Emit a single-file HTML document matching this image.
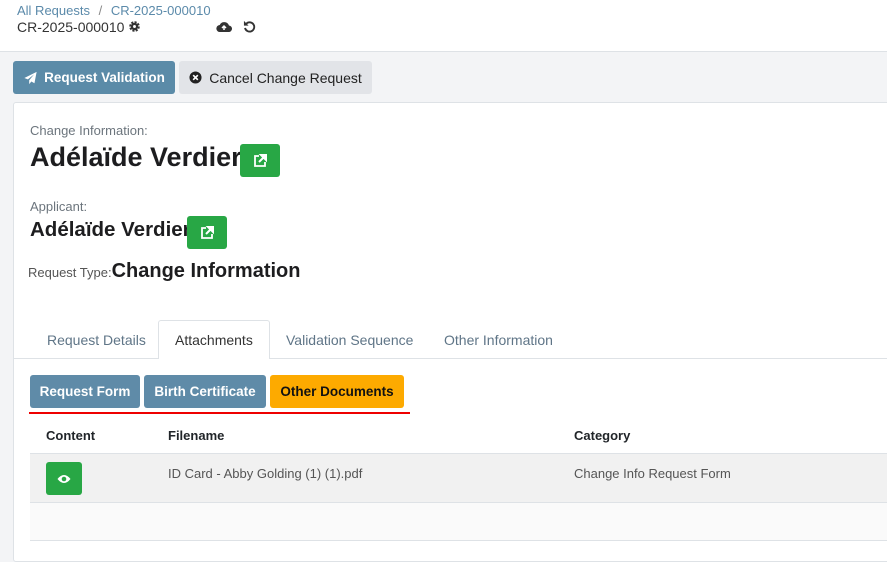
<!DOCTYPE html>
<html><head><meta charset="utf-8"><style>
*{box-sizing:border-box;margin:0;padding:0}
body{width:887px;height:543px;overflow:hidden;background:#f3f4f6;font-family:"Liberation Sans",sans-serif;color:#212529;position:relative}
.abs{position:absolute;white-space:nowrap}
.hdr{left:0;top:0;width:887px;height:52px;background:#fff;border-bottom:1px solid #dee2e6}
.btn{position:absolute;border-radius:3px;font-size:14px;font-weight:bold;display:flex;align-items:center;justify-content:center;white-space:nowrap}
.card{left:13px;top:102px;width:880px;height:460px;background:#fff;border:1px solid #dee2e6;border-radius:3px}
.lbl{font-size:13px;color:#6c757d}
.g{background:#28a745;border-radius:3px;display:flex;align-items:center;justify-content:center}
.tab{position:absolute;top:332px;font-size:14px;color:#5f7587;white-space:nowrap}
</style></head><body>
<div class="abs hdr"></div>
<div class="abs" style="left:17px;top:3px;font-size:13px;color:#5b8aaa">All Requests <span style="color:#888;margin:0 5px">/</span> CR-2025-000010</div>
<div class="abs" style="left:17px;top:19px;font-size:14px;color:#333">CR-2025-000010</div>
<svg class="abs" style="left:128px;top:20px" width="13" height="13" viewBox="0 0 16 16"><circle cx="8" cy="8" r="5" fill="none" stroke="#333" stroke-width="3" stroke-dasharray="2.5 1.4"/><circle cx="8" cy="8" r="4.5" fill="#333"/><circle cx="8" cy="8" r="1.8" fill="#fff"/></svg>
<svg class="abs" style="left:216px;top:20px" width="16" height="13" viewBox="0 0 16 13"><path d="M4 12a3.5 3.5 0 0 1-.3-7A5 5 0 0 1 13 5.5a3.2 3.2 0 0 1-.5 6.5z" fill="#333"/><path d="M8 10V6M6 8l2-2 2 2" stroke="#fff" stroke-width="1.5" fill="none"/></svg>
<svg class="abs" style="left:243px;top:20px" width="13" height="13" viewBox="0 0 14 14"><path d="M3.5 4A5 5 0 1 1 2.2 8.5" stroke="#333" stroke-width="2" fill="none"/><path d="M1 1v5h5z" fill="#333"/></svg>
<div class="btn" style="left:13px;top:61px;width:162px;height:33px;background:#5b8ba8;color:#fff;font-size:13.5px"><svg width="15" height="14" viewBox="0 0 16 16" style="margin-right:6px"><path d="M15 1L1 8l4 1.5L12 4 6.5 10.5V15l2.5-3 3.5 2z" fill="#fff"/></svg>Request Validation</div>
<div class="btn" style="left:179px;top:61px;width:193px;height:33px;background:#e2e4e8;color:#222;font-weight:normal"><svg width="13" height="13" viewBox="0 0 14 14" style="margin-right:7px"><circle cx="7" cy="7" r="6.5" fill="#222"/><path d="M4.5 4.5l5 5M9.5 4.5l-5 5" stroke="#fff" stroke-width="1.8"/></svg>Cancel Change Request</div>
<div class="abs card"></div>
<div class="abs lbl" style="left:30px;top:123px">Change Information:</div>
<div class="abs" style="left:30px;top:142px;font-size:27px;font-weight:bold;color:#1d1d1f">Adélaïde Verdier</div>
<div class="abs g" style="left:240px;top:144px;width:40px;height:33px"><svg width="14" height="14" viewBox="0 0 14 14"><path d="M6 2H2v10h10V8" stroke="#fff" stroke-width="1.8" fill="none"/><path d="M8 1h5v5zM12 2L6 8" stroke="#fff" stroke-width="2" fill="#fff"/></svg></div>
<div class="abs lbl" style="left:30px;top:199px">Applicant:</div>
<div class="abs" style="left:30px;top:218px;font-size:20.5px;font-weight:bold;color:#1d1d1f">Adélaïde Verdier</div>
<div class="abs g" style="left:187px;top:216px;width:40px;height:33px"><svg width="14" height="14" viewBox="0 0 14 14"><path d="M6 2H2v10h10V8" stroke="#fff" stroke-width="1.8" fill="none"/><path d="M8 1h5v5zM12 2L6 8" stroke="#fff" stroke-width="2" fill="#fff"/></svg></div>
<div class="abs" style="left:28px;top:260px;font-size:13px;color:#555">Request Type:<span style="font-size:20px;color:#1d1d1f;font-weight:bold">Change Information</span></div>
<div class="abs" style="left:14px;top:358px;width:873px;border-top:1px solid #dee2e6"></div>
<div class="abs" style="left:158px;top:320px;width:112px;height:39px;background:#fff;border:1px solid #dee2e6;border-bottom:none;border-radius:3px 3px 0 0"></div>
<div class="tab" style="left:47px">Request Details</div>
<div class="tab" style="left:175px;color:#333">Attachments</div>
<div class="tab" style="left:286px">Validation Sequence</div>
<div class="tab" style="left:444px">Other Information</div>
<div class="btn" style="left:30px;top:375px;width:110px;height:33px;background:#5f8ba8;color:#fff;font-size:13.5px">Request Form</div>
<div class="btn" style="left:144px;top:375px;width:122px;height:33px;background:#5f8ba8;color:#fff;font-size:13.5px">Birth Certificate</div>
<div class="btn" style="left:270px;top:375px;width:134px;height:33px;background:#fdaa00;color:#111;font-size:13.5px">Other Documents</div>
<div class="abs" style="left:29px;top:412px;width:381px;height:2px;background:#e00"></div>
<div class="abs" style="left:46px;top:428px;font-size:13px;font-weight:bold">Content</div>
<div class="abs" style="left:168px;top:428px;font-size:13px;font-weight:bold">Filename</div>
<div class="abs" style="left:574px;top:428px;font-size:13px;font-weight:bold">Category</div>
<div class="abs" style="left:30px;top:453px;width:857px;height:50px;background:#f1f1f1;border-top:1px solid #dee2e6;border-bottom:1px solid #dee2e6"></div>
<div class="abs" style="left:30px;top:503px;width:857px;height:38px;background:#fafafa;border-bottom:1px solid #dee2e6"></div>
<div class="abs g" style="left:46px;top:462px;width:36px;height:33px"><svg width="14" height="10" viewBox="0 0 14 10"><path d="M0.5 5Q7-3 13.5 5Q7 13 0.5 5z" fill="#fff"/><circle cx="7" cy="5" r="2.3" fill="#28a745"/></svg></div>
<div class="abs" style="left:168px;top:466px;font-size:13px;color:#555">ID Card - Abby Golding (1) (1).pdf</div>
<div class="abs" style="left:574px;top:466px;font-size:13px;color:#555">Change Info Request Form</div>
</body></html>
